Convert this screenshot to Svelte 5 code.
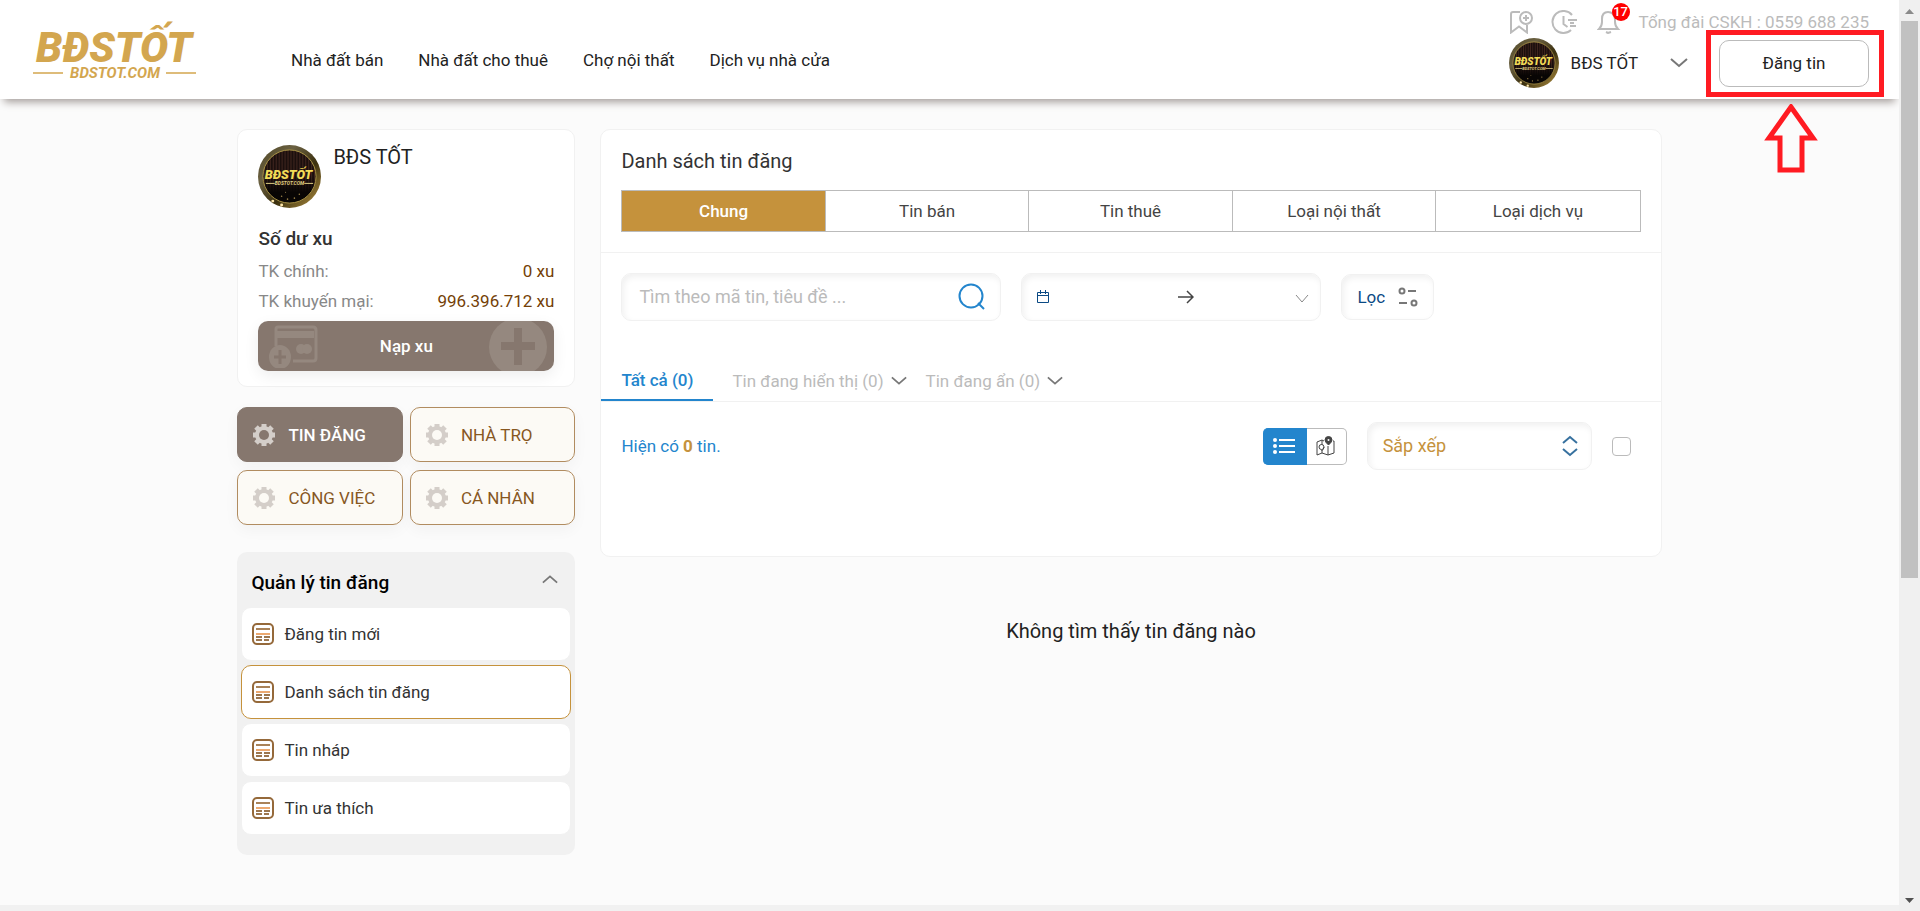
<script>
	const nav = ['Nhà đất bán', 'Nhà đất cho thuê', 'Chợ nội thất', 'Dịch vụ nhà cửa'];
	const sections = ['TIN ĐĂNG', 'NHÀ TRỌ', 'CÔNG VIỆC', 'CÁ NHÂN'];
	const links = ['Đăng tin mới', 'Danh sách tin đăng', 'Tin nháp', 'Tin ưa thích'];
	const types = ['Chung', 'Tin bán', 'Tin thuê', 'Loại nội thất', 'Loại dịch vụ'];

	let section = $state('TIN ĐĂNG');
	let link = $state('Danh sách tin đăng');
	let type = $state('Chung');
	let keyword = $state('');
	let open = $state(true);
	let view = $state('list');
</script>

{#snippet avatar()}
	<svg class="avatar" viewBox="0 0 64 64" role="img" aria-label="BĐS TỐT">
		<defs>
			<linearGradient id="ring" x1="0" y1="0" x2="1" y2="1">
				<stop offset="0" stop-color="#4c4322" />
				<stop offset="0.3" stop-color="#6b6142" />
				<stop offset="0.6" stop-color="#3b300f" />
				<stop offset="0.85" stop-color="#8a7030" />
				<stop offset="1" stop-color="#5a4718" />
			</linearGradient>
			<pattern id="curtain" width="3" height="64" patternUnits="userSpaceOnUse">
				<rect width="3" height="64" fill="#1b0f0d" />
				<rect width="1" height="64" fill="#41261f" />
			</pattern>
			<linearGradient id="floor" x1="0" y1="0" x2="0" y2="1">
				<stop offset="0.5" stop-color="#080504" stop-opacity="0" />
				<stop offset="0.8" stop-color="#080504" />
			</linearGradient>
		</defs>
		<circle cx="32" cy="32" r="32" fill="url(#ring)" />
		<circle cx="32" cy="32" r="27" fill="url(#curtain)" />
		<circle cx="32" cy="32" r="27" fill="url(#floor)" stroke="#a99245" stroke-width="1" />
		<text x="31" y="35" class="mark">BĐSTỐT</text>
		<path d="M8 39h9M47 39h9" stroke="#e0cf83" stroke-width="1" />
		<text x="32" y="41" class="submark">BDSTOT.COM</text>
		<g fill="#9b8148">
			<circle cx="24" cy="52" r="0.8" /><circle cx="30" cy="55" r="0.8" /><circle cx="37" cy="54" r="0.8" />
			<circle cx="42" cy="50" r="0.8" /><circle cx="28" cy="48" r="0.6" />
		</g>
		<circle cx="15" cy="57" r="1.5" fill="#ffe8ac" />
		<circle cx="24" cy="61" r="1.5" fill="#ffe8ac" />
	</svg>
{/snippet}

{#snippet chevron()}
	<svg class="chevron" viewBox="0 0 18 10" aria-hidden="true">
		<path d="M1 1l8 7 8-7" fill="none" stroke="#777" stroke-width="2" />
	</svg>
{/snippet}

{#snippet gear()}
	<svg class="gear" width="24" height="24" viewBox="0 0 24 24" aria-hidden="true">
		<g stroke-width="5" stroke="currentColor">
			<path d="M12 1v22M1 12h22M4 4l16 16M20 4L4 20" />
		</g>
		<circle cx="12" cy="12" r="9" fill="currentColor" />
		<circle class="hole" cx="12" cy="12" r="5" />
	</svg>
{/snippet}

<div class="window">
	<div class="page">
		<header>
			<a class="logo" href="/" aria-label="BĐS TỐT">
				<svg width="166" height="68" viewBox="0 0 166 68">
					<text x="82" y="49" class="logo-text">BĐSTỐT</text>
					<path d="M1 60h30M134 60h30" stroke="#d3a64f" stroke-width="1.5" />
					<text x="83" y="65" class="logo-sub">BDSTOT.COM</text>
				</svg>
			</a>
			<nav>
				{#each nav as item}
					<a href="/">{item}</a>
				{/each}
			</nav>
			<div class="account">
				<div class="tools">
					<button aria-label="Tin đã lưu">
						<svg width="24" height="24" viewBox="0 0 24 24">
							<path d="M11 2H4Q2 2 2 4v18.500l8-6 8 6V15" />
							<circle cx="17" cy="8" r="6" />
							<path d="M17 5v6M14 8h6" />
						</svg>
					</button>
					<button aria-label="Lịch sử">
						<svg width="28" height="24" viewBox="0 0 28 24">
							<path d="M21 5A11 11 0 1 0 20 20M12.500 6v8l4 3M17 10h9M19 13h4M19 16h6" />
						</svg>
					</button>
					<button class="bell" aria-label="Thông báo">
						<svg width="24" height="24" viewBox="0 0 24 24">
							<path d="M2 19Q5 16 5 12V9Q5 2 11 2t7 7v3q0 4 3 7zM9 22l2 1 3-1" />
						</svg>
						<span class="badge">17</span>
					</button>
					<span>Tổng đài CSKH : 0559 688 235</span>
				</div>
				<div class="user">
					{@render avatar()}
					<button class="name">BĐS TỐT {@render chevron()}</button>
					<div class="post">
						<button>Đăng tin</button>
						<div class="frame"></div>
						<svg class="pointer" width="54" height="70" viewBox="0 0 54 70" aria-hidden="true">
							<path d="M27 3L49 34H38V66H16V34H5z" fill="none" stroke="#ff1b22" stroke-width="5" />
						</svg>
					</div>
				</div>
			</div>
		</header>

		<div class="container">
			<aside>
				<section class="card wallet">
					<div class="who">
						{@render avatar()}
						<span>BĐS TỐT</span>
					</div>
					<h2>Số dư xu</h2>
					<dl>
						<dt>TK chính:</dt>
						<dd>0 xu</dd>
						<dt>TK khuyến mại:</dt>
						<dd>996.396.712 xu</dd>
					</dl>
					<button class="topup">
						<svg class="left" width="52" height="44" viewBox="0 0 52 44" aria-hidden="true">
							<path d="M8 22V5q0-2 2-2h35q3 0 3 3v28q0 3-3 3H25" fill="none" stroke="currentColor" stroke-width="3" />
							<path d="M8 7h38v7H8z" fill="currentColor" />
							<circle cx="33" cy="25" r="5" fill="currentColor" />
							<circle cx="39" cy="25" r="5" fill="currentColor" />
							<ellipse cx="12" cy="33" rx="11" ry="12" fill="currentColor" />
							<path d="M12 26v14M6 33h12" stroke="#86776e" stroke-width="3" />
						</svg>
						Nạp xu
						<svg class="right" width="58" height="50" viewBox="0 0 58 50" aria-hidden="true">
							<circle cx="29" cy="26" r="29" fill="currentColor" />
							<path d="M29 7v37M12 25h34" stroke="#86776e" stroke-width="8" />
						</svg>
					</button>
				</section>

				<div class="sections">
					{#each sections as item}
						<button class:active={section === item} onclick={() => (section = item)}>
							{@render gear()}
							{item}
						</button>
					{/each}
				</div>

				<section class="panel">
					<button class="toggle" class:open onclick={() => (open = !open)}>
						Quản lý tin đăng
						{@render chevron()}
					</button>
					{#if open}
						<ul>
							{#each links as item}
								<li>
									<a href="/" class:active={link === item} onclick={(e) => { e.preventDefault(); link = item; }}>
										<svg width="22" height="22" viewBox="0 0 22 22" aria-hidden="true">
											<rect x="1" y="1" width="20" height="20" rx="4" fill="#fff" stroke="#95693a" stroke-width="2" />
											<path d="M4 6h14" stroke="#a98258" stroke-width="2" />
											<path d="M4 11h14" stroke="#eca970" stroke-width="2" />
											<path d="M4 14h6M12 14h6M4 17h6M12 17h5" stroke="#7c4a15" stroke-width="1.500" />
										</svg>
										{item}
									</a>
								</li>
							{/each}
						</ul>
					{/if}
				</section>
			</aside>

			<main>
				<section class="card listing">
					<div class="top">
						<h1>Danh sách tin đăng</h1>
						<div class="types">
							{#each types as item}
								<button class:active={type === item} onclick={() => (type = item)}>{item}</button>
							{/each}
						</div>
					</div>

					<div class="filters">
						<div class="field search">
							<input type="text" aria-label="Tìm kiếm" placeholder="Tìm theo mã tin, tiêu đề ..." bind:value={keyword} />
							<button aria-label="Tìm">
								<svg width="28" height="28" viewBox="0 0 28 28">
									<circle cx="13" cy="13" r="11.500" /><path d="M20 20l6 6" />
								</svg>
							</button>
						</div>
						<div class="field dates">
							<svg width="14" height="14" viewBox="0 0 14 14" aria-hidden="true">
								<path d="M1.500 2.500h11v10h-11zM1.500 5.500h11M4.500 0v4M9.500 0v4" fill="none" stroke="#0b4a84" />
							</svg>
							<input class="from" type="text" aria-label="Từ ngày" />
							<svg width="16" height="16" viewBox="0 0 16 16" aria-hidden="true">
								<path d="M0 8h14M9 2l6 6-6 6" fill="none" stroke="#444" stroke-width="1.500" />
							</svg>
							<input class="to" type="text" aria-label="Đến ngày" />
							<svg width="14" height="14" viewBox="0 0 14 14" aria-hidden="true">
								<path d="M1 5l6 7 6-7" fill="none" stroke="#888" />
							</svg>
						</div>
						<button class="field filter">
							Lọc
							<svg width="20" height="20" viewBox="0 0 20 20" aria-hidden="true">
								<g fill="none" stroke="#777" stroke-width="2">
									<circle cx="4" cy="4" r="2.500" /><path d="M10 4h8M1 16h8" /><circle cx="16" cy="16" r="2.500" />
								</g>
							</svg>
						</button>
					</div>

					<div class="status">
						<button class="active">Tất cả (0)</button>
						<button>Tin đang hiển thị (0) {@render chevron()}</button>
						<button>Tin đang ẩn (0) {@render chevron()}</button>
					</div>

					<div class="result">
						<p>Hiện có <b>0</b> tin.</p>
						<div class="views">
							<button class:active={view === 'list'} aria-label="Danh sách" onclick={() => (view = 'list')}>
								<svg width="22" height="18" viewBox="0 0 22 18">
									<path d="M6 3h16M6 9h16M6 15h16" stroke="currentColor" stroke-width="2" />
									<g fill="currentColor">
										<circle cx="2" cy="3" r="2" /><circle cx="2" cy="9" r="2" /><circle cx="2" cy="15" r="2" />
									</g>
								</svg>
							</button>
							<button class:active={view === 'map'} aria-label="Bản đồ" onclick={() => (view = 'map')}>
								<svg width="20" height="20" viewBox="0 0 20 20" fill="none" stroke="currentColor">
									<path d="M8 5L6 4 1 6v13l5-2 6 2 6-2V5h-1M6 4v5M6 14v3M12 10v9" />
									<circle cx="5.500" cy="11" r="2.500" />
									<path d="M8 11q0 2-2.500 4" />
									<path d="M12.500 9Q9 6 9 4a3.500 3.500 0 0 1 7 0q0 2-3.500 5z" fill="currentColor" />
									<circle cx="12.500" cy="4" r="1" fill="#fff" stroke="none" />
								</svg>
							</button>
						</div>
						<div class="field sort">
							<select aria-label="Sắp xếp">
								<option>Sắp xếp</option>
							</select>
							<svg width="16" height="22" viewBox="0 0 16 22" aria-hidden="true">
								<path d="M1 8l7-6 7 6M1 14l7 6 7-6" fill="none" stroke="#37719f" stroke-width="2" />
							</svg>
						</div>
						<input type="checkbox" aria-label="Chọn tất cả" />
					</div>
				</section>
				<p class="empty">Không tìm thấy tin đăng nào</p>
			</main>
		</div>
		<footer></footer>
	</div>

	<div class="scrollbar" aria-hidden="true">
		<svg width="9" height="5" viewBox="0 0 9 5"><path d="M0 5h9L4.500 0z" fill="#8b8b8b" /></svg>
		<div class="track"><div class="thumb"></div></div>
		<svg width="9" height="5" viewBox="0 0 9 5"><path d="M0 0h9L4.500 5z" fill="#505050" /></svg>
	</div>
</div>

<style>
	:global(body) {
		margin: 0;
		font-family: Roboto, 'Liberation Sans', sans-serif;
		font-size: 17px;
		line-height: 24px;
		color: #222;
		background: #fbfbfb;
	}
	* {
		box-sizing: border-box;
	}
	h1, h2, p, dl, dd, ul {
		margin: 0;
		padding: 0;
	}
	button, input, select {
		font: inherit;
		color: inherit;
		background: none;
		border: 0;
		padding: 0;
		margin: 0;
		outline: 0;
	}
	button {
		cursor: pointer;
	}
	a {
		color: inherit;
		text-decoration: none;
	}
	svg {
		display: block;
		flex: none;
	}
	.chevron {
		width: 16px;
		height: 10px;
	}

	.window {
		display: flex;
		align-items: flex-start;
	}
	.page {
		flex: 1;
		min-width: 0;
		min-height: 100vh;
		display: flex;
		flex-direction: column;
	}

	header {
		position: relative;
		display: flex;
		height: 99px;
		padding: 0 30px 0 32px;
		background: #fff;
		box-shadow: 0 7px 8px -4px #a39c99;
	}
	.logo {
		padding-top: 13px;
	}
	.logo-text {
		font-size: 42px;
		font-weight: 900;
		font-style: italic;
		fill: #d3a64f;
		text-anchor: middle;
	}
	.logo-sub {
		font-size: 15px;
		font-weight: 700;
		font-style: italic;
		fill: #d3a64f;
		text-anchor: middle;
	}
	nav {
		display: flex;
		gap: 35px;
		padding: 48px 0 0 93px;
	}

	.account {
		margin-left: auto;
	}
	.tools {
		display: flex;
		align-items: center;
		gap: 18px;
		height: 38px;
		padding-top: 6px;
		color: #bbb;
	}
	.tools svg {
		fill: none;
		stroke: #bbb;
		stroke-width: 2;
	}
	.bell {
		position: relative;
	}
	.badge {
		position: absolute;
		top: -7px;
		left: 15px;
		width: 18px;
		height: 18px;
		border-radius: 50%;
		background: #f00;
		color: #fff;
		font-size: 13px;
		font-weight: 500;
		line-height: 18px;
		text-align: center;
	}
	.user {
		display: flex;
		align-items: center;
	}
	.avatar {
		width: 50px;
		height: 50px;
	}
	.mark {
		font-size: 13px;
		font-weight: 900;
		font-style: italic;
		fill: #f3dc57;
		text-anchor: middle;
	}
	.submark {
		font-size: 5px;
		font-weight: 700;
		font-style: italic;
		fill: #e0cf83;
		text-anchor: middle;
	}
	.name {
		display: flex;
		align-items: center;
		gap: 32px;
		margin: 0 28px 0 12px;
	}
	.name .chevron {
		width: 18px;
	}
	.post {
		position: relative;
		margin-left: auto;
	}
	.post button {
		display: block;
		width: 150px;
		height: 47px;
		border: 1px solid #bbb;
		border-radius: 10px;
	}
	.frame {
		position: absolute;
		inset: -10px -15px -10px -13px;
		border: 5px solid #ff1b22;
		pointer-events: none;
	}
	.pointer {
		position: absolute;
		top: 64px;
		left: 45px;
	}

	.container {
		display: grid;
		grid-template-columns: 338px 1fr;
		gap: 25px;
		width: 75%;
		margin: 0 auto;
		padding: 30px 0;
		flex: 1;
	}
	.card {
		background: #fff;
		border: 1px solid #f1f1f1;
		border-radius: 10px;
	}
	.wallet {
		padding: 15px 20px;
	}
	.who {
		display: flex;
		gap: 12px;
		font-size: 20px;
	}
	.who .avatar {
		width: 63px;
		height: 63px;
	}
	h2 {
		margin: 19px 0 5px;
		font-size: 19px;
		font-weight: 500;
		color: #333;
	}
	dl {
		display: grid;
		grid-template-columns: auto 1fr;
		line-height: 30px;
		color: #888;
	}
	dd {
		text-align: right;
		color: #743f07;
	}
	.topup {
		position: relative;
		display: block;
		width: 100%;
		height: 50px;
		margin-top: 5px;
		border-radius: 10px;
		background: #86776e;
		box-shadow: 0 5px 15px #00000012;
		color: #fff;
		font-weight: 500;
		overflow: hidden;
	}
	.topup svg {
		position: absolute;
		top: 0;
		color: #95887f;
	}
	.topup .left {
		left: 10px;
		top: 3px;
	}
	.topup .right {
		right: 7px;
	}

	.sections {
		display: grid;
		grid-template-columns: 1fr 1fr;
		gap: 8px 7px;
		margin: 20px 0 27px;
	}
	.sections button {
		display: flex;
		align-items: center;
		gap: 12px;
		height: 55px;
		padding: 0 14px;
		border: 1px solid #b18c60;
		border-radius: 10px;
		background: #fcfaf5;
		box-shadow: 0 5px 15px #0000000a;
		color: #87571f;
	}
	.sections .active {
		border-color: #86776e;
		background: #86776e;
		color: #fff;
		font-weight: 500;
	}
	.gear {
		color: #d4cec9;
	}
	.hole {
		fill: #fcfaf5;
	}
	.active .hole {
		fill: #86776e;
	}

	.panel {
		padding: 8px 4px 20px;
		border-radius: 10px;
		background: #f1f1f1;
	}
	.toggle {
		display: flex;
		justify-content: space-between;
		width: 100%;
		height: 47px;
		padding: 11px 10px 0;
		font-size: 19px;
		font-weight: 500;
		color: #000;
	}
	.toggle .chevron {
		margin: 3px;
	}
	.toggle.open .chevron {
		transform: rotate(180deg);
	}
	ul {
		display: grid;
		gap: 4px;
		list-style: none;
	}
	li a {
		display: flex;
		align-items: center;
		gap: 10px;
		height: 54px;
		padding: 0 10px;
		border: 1px solid #f1f1f1;
		border-radius: 10px;
		background: #fff;
		color: #333;
	}
	li .active {
		border-color: #c5923c;
	}

	.listing {
		padding-bottom: 86px;
	}
	.top {
		padding: 19px 20px 20px;
		border-bottom: 1px solid #f1f1f1;
	}
	h1 {
		font-size: 20px;
		line-height: 24px;
		font-weight: 400;
		color: #333;
	}
	.types {
		display: grid;
		grid-template-columns: repeat(5, 1fr);
		margin-top: 17px;
		border: 1px solid #bbb;
	}
	.types button {
		height: 40px;
		color: #444;
	}
	.types button:not(:last-child) {
		border-right: 1px solid #bbb;
	}
	.types .active {
		background: #c5923c;
		color: #fff;
		font-weight: 500;
	}

	.filters {
		display: flex;
		align-items: center;
		gap: 20px;
		padding: 20px 20px 0;
	}
	.field {
		display: flex;
		align-items: center;
		height: 48px;
		border: 1px solid #f1f1f1;
		border-radius: 10px;
		background: #fff;
		box-shadow: inset 2px 3px 6px #0000000f;
	}
	.search {
		width: 380px;
		padding: 0 14px 0 17px;
	}
	.search input {
		flex: 1;
		min-width: 0;
		font-size: 18px;
	}
	.search svg {
		fill: none;
		stroke: #2385cd;
		stroke-width: 2;
	}
	::placeholder {
		color: #bbb;
		opacity: 1;
	}
	.dates {
		width: 300px;
		padding: 0 11px 0 14px;
	}
	.dates input {
		width: 0;
	}
	.from {
		flex: 5;
	}
	.to {
		flex: 4;
	}
	.filter {
		gap: 13px;
		height: 46px;
		padding: 0 15px;
		color: #0b4a84;
	}

	.status {
		display: flex;
		margin-top: 40px;
		border-bottom: 1px solid #f1f1f1;
	}
	.status button {
		display: flex;
		align-items: center;
		gap: 7px;
		height: 40px;
		padding-left: 19px;
		color: #bbb;
	}
	.status .active {
		padding: 0 20px;
		border-bottom: 2px solid #2385cd;
		color: #2385cd;
		font-weight: 500;
	}

	.result {
		display: flex;
		align-items: center;
		gap: 20px;
		padding: 20px 30px 0 20px;
		color: #2385cd;
	}
	.result p {
		margin-right: auto;
	}
	.result b {
		font-weight: 700;
		color: #c5923c;
	}
	.views {
		display: flex;
		height: 37px;
	}
	.views button {
		display: grid;
		place-items: center;
		width: 40px;
		border: 1px solid #bbb;
		border-left: 0;
		border-radius: 0 5px 5px 0;
		color: #444;
	}
	.views button:first-child {
		width: 44px;
		border-radius: 5px 0 0 5px;
	}
	.views .active {
		border-color: #2385cd;
		background: #2385cd;
		color: #fff;
	}
	.sort {
		position: relative;
		width: 225px;
	}
	.sort select {
		appearance: none;
		width: 100%;
		height: 100%;
		padding: 0 15px;
		font-size: 18px;
		color: #c5923c;
	}
	.sort svg {
		position: absolute;
		right: 13px;
		pointer-events: none;
	}
	input[type='checkbox'] {
		appearance: none;
		width: 19px;
		height: 19px;
		border: 1px solid #bbb;
		border-radius: 4px;
		background: #fff;
	}
	input[type='checkbox']:checked {
		background: #2385cd;
	}
	.empty {
		margin-top: 62px;
		font-size: 20px;
		text-align: center;
	}
	footer {
		height: 6px;
		background: #f1f1f1;
	}

	.scrollbar {
		position: sticky;
		top: 0;
		z-index: 1;
		display: flex;
		flex-direction: column;
		align-items: center;
		gap: 7px;
		width: 21px;
		height: 100vh;
		padding: 9px 0 8px;
		background: #f0f0f0;
	}
	.track {
		flex: 1;
		width: 17px;
	}
	.thumb {
		height: 64%;
		background: #c1c1c1;
	}
</style>
